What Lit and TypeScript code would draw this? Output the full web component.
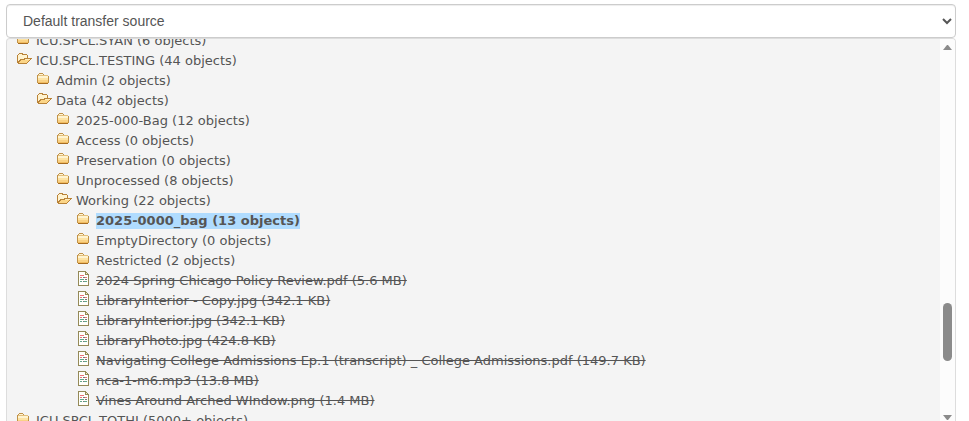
import { LitElement, html, css, svg } from "lit";
import { customElement, property, state } from "lit/decorators.js";
import { classMap } from "lit/directives/class-map.js";

type Kind = "closed" | "open" | "file";

interface Entry {
  name: string;
  kind: Kind;
  children?: Entry[];
}

const file = (name: string): Entry => ({ name, kind: "file" });
const folder = (name: string): Entry => ({ name, kind: "closed" });

const ENTRIES: Entry[] = [
  folder("ICU.SPCL.SYAN (6 objects)"),
  {
    name: "ICU.SPCL.TESTING (44 objects)",
    kind: "open",
    children: [
      folder("Admin (2 objects)"),
      {
        name: "Data (42 objects)",
        kind: "open",
        children: [
          folder("2025-000-Bag (12 objects)"),
          folder("Access (0 objects)"),
          folder("Preservation (0 objects)"),
          folder("Unprocessed (8 objects)"),
          {
            name: "Working (22 objects)",
            kind: "open",
            children: [
              folder("2025-0000_bag (13 objects)"),
              folder("EmptyDirectory (0 objects)"),
              folder("Restricted (2 objects)"),
              file("2024 Spring Chicago Policy Review.pdf (5.6 MB)"),
              file("LibraryInterior - Copy.jpg (342.1 KB)"),
              file("LibraryInterior.jpg (342.1 KB)"),
              file("LibraryPhoto.jpg (424.8 KB)"),
              file("Navigating College Admissions Ep.1 (transcript) _ College Admissions.pdf (149.7 KB)"),
              file("nca-1-m6.mp3 (13.8 MB)"),
              file("Vines Around Arched WIndow.png (1.4 MB)"),
            ],
          },
        ],
      },
    ],
  },
  folder("ICU.SPCL.TOTHJ (5000+ objects)"),
];

const ICONS = {
  closed: svg`
    <path d="M3 2H7V3H8V4H12V5H13V12H12V13H2V12H1V4H2V3H3Z" fill="#c09248"/>
    <path d="M3 3H7V4H3Z" fill="#fff3d4"/>
    <path d="M2 4H12V5H2Z" fill="#e3bf7c"/>
    <path d="M2 5H12V7H2Z" fill="#fff3cf"/>
    <path d="M2 7H12V9H2Z" fill="#fde3a4"/>
    <path d="M2 9H12V11H2Z" fill="#fad285"/>
    <path d="M2 11H12V12H2Z" fill="#f0bc62"/>
    <path d="M2 12H12V13H2Z" fill="#a66c22"/>`,
  open: svg`
    <path d="M3 2H7V3H11V4H12V7H16V8H15V9H14V10H13V11H12V12H11V13H2V12H1V4H2V3H3Z" fill="#b98338"/>
    <path d="M3 3H6V4H11V7H8V8H4V9H3V10H2V4H3Z" fill="#fff3d0"/>
    <path d="M9 8H14V9H13V10H12V11H11V12H3V11H4V10H5V9H9Z" fill="#fbd587"/>
    <path d="M9 8H14V9H9Z" fill="#ffeab8"/>`,
  file: svg`
    <path d="M2 0H10V1H11V2H12V3H13V15H2Z" fill="#948957"/>
    <path d="M3 1H9V4H12V14H3Z" fill="#fffffa"/>
    <path d="M10 2H11V3H10Z" fill="#f3edc8"/>
    <path d="M4 4H8V5H4ZM4 6H6V7H4ZM9 6H11V7H9Z" fill="#e9747c"/>
    <path d="M7 6H9V7H7ZM9 8H11V9H9ZM7 10H8V11H7Z" fill="#77777a"/>
    <path d="M4 8H8V9H4ZM4 10H6V11H4ZM8 10H11V11H8Z" fill="#62a68b"/>`,
};

@customElement("tree-node")
class TreeNode extends LitElement {
  @property({ attribute: false }) entry!: Entry;
  @property() selected = "";

  static styles = css`
    :host {
      display: block;
    }
    .row {
      display: flex;
      align-items: flex-start;
      width: max-content;
      height: 20px;
      padding: 0;
      border: 0;
      background: none;
      color: #555;
      font: 13px/16px Verdana, "DejaVu Sans", sans-serif;
      text-align: left;
      cursor: pointer;
    }
    .icon {
      width: 16px;
      height: 16px;
      margin-right: 4px;
      flex: none;
    }
    .label {
      margin-top: 2px;
      white-space: nowrap;
    }
    .file .label {
      text-decoration: line-through;
    }
    .selected .label {
      background: #b0dcff;
      font-weight: bold;
    }
    .children {
      padding-left: 20px;
    }
  `;

  private pick() {
    this.dispatchEvent(
      new CustomEvent("pick", { detail: this.entry.name, bubbles: true, composed: true })
    );
  }

  render() {
    const { name, kind, children } = this.entry;
    const classes = { row: true, file: kind === "file", selected: name === this.selected };
    return html`
      <button class=${classMap(classes)} @click=${this.pick}>
        <svg class="icon" viewBox="0 0 16 16" shape-rendering="crispEdges" aria-hidden="true">
          ${ICONS[kind]}
        </svg>
        <span class="label">${name}</span>
      </button>
      ${children
        ? html`<div class="children">
            ${children.map(
              (c) => html`<tree-node .entry=${c} .selected=${this.selected}></tree-node>`
            )}
          </div>`
        : null}
    `;
  }
}

@customElement("app-root")
class AppRoot extends LitElement {
  @state() private selected = "2025-0000_bag (13 objects)";

  static styles = css`
    :host {
      display: flex;
      flex-direction: column;
      height: 100vh;
      box-sizing: border-box;
      padding: 4px 13px 0 6px;
      overflow: hidden;
      background: #fff;
    }
    .source {
      flex: none;
      width: 100%;
      height: 34px;
      padding: 6px 12px;
      border: 1px solid #ccc;
      border-radius: 4px;
      background: #fff;
      box-shadow: inset 0 1px 1px rgba(0, 0, 0, 0.075);
      color: #555;
      font: 14px/20px "Liberation Sans", Arial, sans-serif;
    }
    .browser {
      flex: 1;
      min-height: 0;
      display: flex;
      border: solid #ddd;
      border-width: 1px 1px 0;
      border-radius: 4px 4px 0 0;
      background: #f4f4f4;
      overflow: hidden;
    }
    .tree {
      flex: 1;
      min-width: 0;
      overflow: hidden;
      padding-left: 9px;
    }
    .list {
      margin-top: -8px;
    }
    .bar {
      width: 15px;
      display: flex;
      flex-direction: column;
      align-items: center;
      background: #fcfcfc;
    }
    .arrow {
      width: 9px;
      height: 5px;
      flex: none;
      margin: 6px 0;
      fill: #8b8b8b;
    }
    .arrow.down {
      margin: 0 0 1px;
    }
    .track {
      flex: 1;
      display: flex;
      flex-direction: column;
    }
    .before {
      flex: 247;
    }
    .thumb {
      flex: 58;
      width: 9px;
      border-radius: 5px;
      background: #8b8b8b;
    }
    .after {
      flex: 54;
    }
  `;

  render() {
    return html`
      <select class="source" aria-label="Transfer source">
        <option>Default transfer source</option>
      </select>
      <div class="browser">
        <div class="tree" @pick=${(e: CustomEvent) => (this.selected = e.detail)}>
          <div class="list">
            ${ENTRIES.map(
              (e) => html`<tree-node .entry=${e} .selected=${this.selected}></tree-node>`
            )}
          </div>
        </div>
        <div class="bar" aria-hidden="true">
          <svg class="arrow" viewBox="0 0 9 5"><path d="M0 5L4 0H5L9 5Z" /></svg>
          <div class="track">
            <div class="before"></div>
            <div class="thumb"></div>
            <div class="after"></div>
          </div>
          <svg class="arrow down" viewBox="0 0 9 5"><path d="M0 0H9L5 5H4Z" /></svg>
        </div>
      </div>
    `;
  }
}
